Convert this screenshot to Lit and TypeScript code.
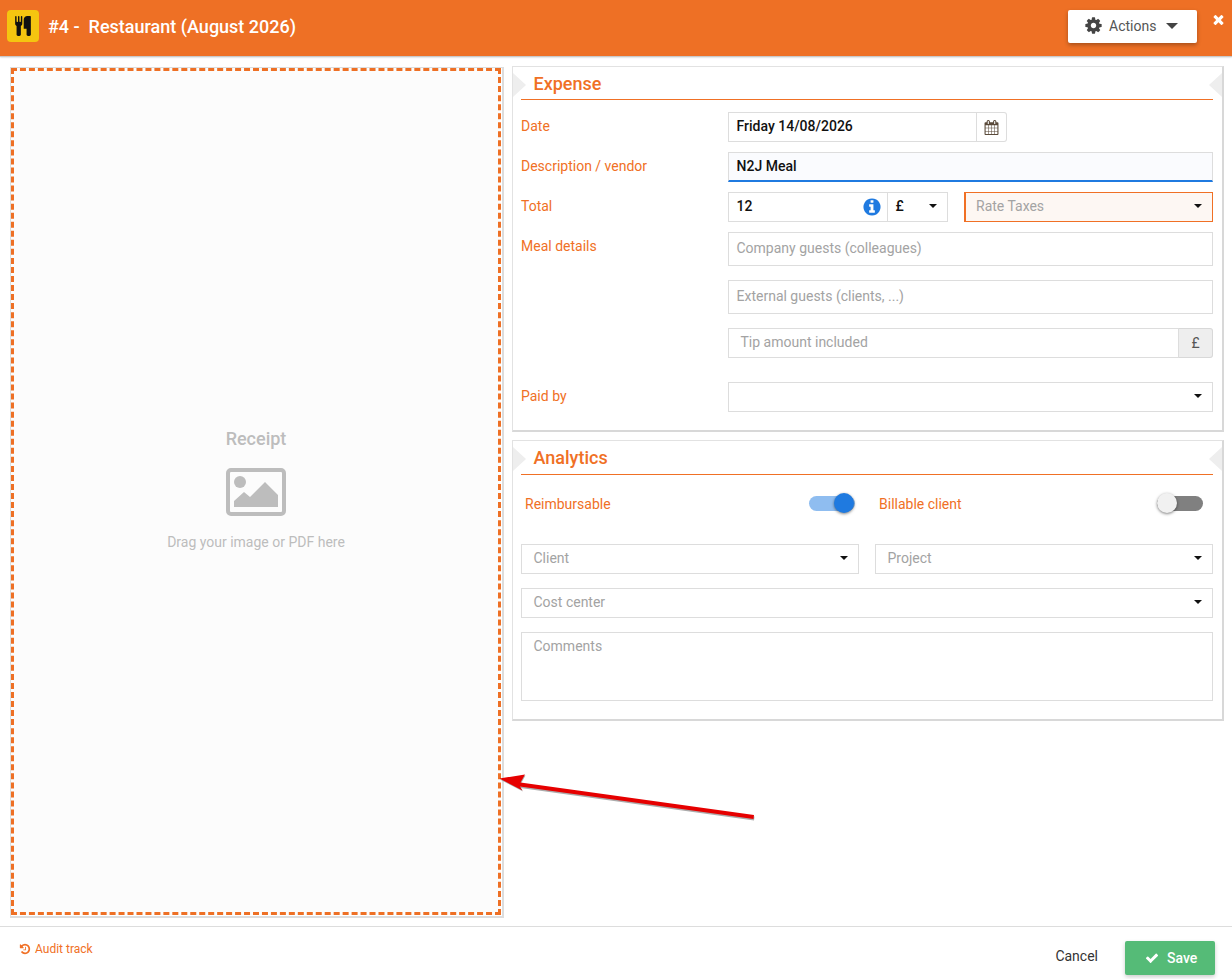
import { LitElement, html, css, svg } from "lit";
import { customElement } from "lit/decorators.js";

const fa = (d: string, cls: string) =>
  html`<svg class=${cls} viewBox="0 0 1792 1792" aria-hidden="true"><path d=${d}></path></svg>`;

const GEAR = "M1152 896q0-106-75-181t-181-75-181 75-75 181 75 181 181 75 181-75 75-181zm512-109v222q0 12-8 23t-20 13l-185 28q-19 54-39 91 35 50 107 138 10 12 10 25t-9 23q-27 37-99 108t-94 71q-12 0-26-9l-138-108q-44 23-91 38-16 136-29 186-7 28-36 28h-222q-14 0-24.500-8.500t-11.500-21.500l-28-184q-49-16-90-37l-141 107q-10 9-25 9-14 0-25-11-126-114-165-168-7-10-7-23 0-12 8-23 15-21 51-66.500t54-70.500q-27-50-41-99l-183-27q-13-2-21-12.500t-8-23.500v-222q0-12 8-23t19-13l186-28q14-46 39-92-40-57-107-138-10-12-10-24 0-10 9-23 26-36 98.500-107.500t94.500-71.500q13 0 26 10l138 107q44-23 91-38 16-136 29-186 7-28 36-28h222q14 0 24.500 8.500t11.500 21.500l28 184q49 16 90 37l142-107q9-9 24-9 13 0 25 10 129 119 165 170 7 8 7 22 0 12-8 23-15 21-51 66.500t-54 70.500q26 50 41 98l183 28q13 2 21 12.500t8 23.500z";
const CHECK = "M1671 566q0 40-28 68l-724 724-136 136q-28 28-68 28t-68-28l-136-136-362-362q-28-28-28-68t28-68l136-136q28-28 68-28t68 28l294 295 656-657q28-28 68-28t68 28l136 136q28 28 28 68z";
const TIMES = "M1490 1322q0 40-28 68l-136 136q-28 28-68 28t-68-28l-294-294-294 294q-28 28-68 28t-68-28l-136-136q-28-28-28-68t28-68l294-294-294-294q-28-28-28-68t28-68l136-136q28-28 68-28t68 28l294 294 294-294q28-28 68-28t68 28l136 136q28 28 28 68t-28 68l-294 294 294 294q28 28 28 68z";
const CUTLERY = "M832 64v640q0 61-35.500 111t-92.500 70v779q0 52-38 90t-90 38h-128q-52 0-90-38t-38-90v-779q-57-20-92.500-70t-35.500-111v-640q0-26 19-45t45-19 45 19 19 45v416q0 26 19 45t45 19 45-19 19-45v-416q0-26 19-45t45-19 45 19 19 45v416q0 26 19 45t45 19 45-19 19-45v-416q0-26 19-45t45-19 45 19 19 45zm768 0v1600q0 52-38 90t-90 38h-128q-52 0-90-38t-38-90v-512h-224q-13 0-22.500-9.500t-9.500-22.500v-800q0-132 94-226t226-94h256q26 0 45 19t19 45z";
const CALENDAR = "M192 1664h288v-288h-288v288zm352 0h320v-288h-320v288zm-352-352h288v-320h-288v320zm352 0h320v-320h-320v320zm-352-384h288v-288h-288v288zm736 736h320v-288h-320v288zm-384-736h320v-288h-320v288zm768 736h288v-288h-288v288zm-384-352h320v-320h-320v320zm-352-864v-288q0-13-9.500-22.500t-22.500-9.500h-64q-13 0-22.500 9.500t-9.500 22.500v288q0 13 9.500 22.500t22.500 9.500h64q13 0 22.500-9.500t9.500-22.500zm736 864h288v-320h-288v320zm-384-384h320v-288h-320v288zm384 0h288v-288h-288v288zm32-480v-288q0-13-9.500-22.500t-22.500-9.500h-64q-13 0-22.500 9.500t-9.500 22.500v288q0 13 9.500 22.500t22.500 9.500h64q13 0 22.500-9.500t9.500-22.500zm384-64v1280q0 52-38 90t-90 38h-1408q-52 0-90-38t-38-90v-1280q0-52 38-90t90-38h128v-96q0-66 47-113t113-47h64q66 0 113 47t47 113v96h384v-96q0-66 47-113t113-47h64q66 0 113 47t47 113v96h128q52 0 90 38t38 90z";
const INFO = "M1152 1376v-160q0-14-9-23t-23-9h-96v-512q0-14-9-23t-23-9h-320q-14 0-23 9t-9 23v160q0 14 9 23t23 9h96v320h-96q-14 0-23 9t-9 23v160q0 14 9 23t23 9h448q14 0 23-9t9-23zm-128-896v-160q0-14-9-23t-23-9h-192q-14 0-23 9t-9 23v160q0 14 9 23t23 9h192q14 0 23-9t9-23zm640 416q0 209-103 385.500t-279.500 279.500-385.500 103-385.500-103-279.500-279.500-103-385.500 103-385.500 279.500-279.500 385.500-103 385.500 103 279.500 279.500 103 385.500z";
const HISTORY = "M1664 896q0 156-61 298t-164 245-245 164-298 61q-172 0-327-72.500t-264-204.500q-7-10-6.500-22.500t8.500-20.500l137-138q10-9 25-9 16 2 23 12 73 95 179 147t225 52q104 0 198.500-40.500t163.500-109.500 109.500-163.500 40.500-198.500-40.500-198.500-109.500-163.500-163.500-109.500-198.500-40.500q-98 0-188 35.500t-160 101.500l137 138q31 30 14 69-17 40-59 40h-448q-26 0-45-19t-19-45v-448q0-42 40-59 39-17 69 14l130 129q107-101 244.500-156.500t284.500-55.500q156 0 298 61t245 164 164 245 61 298zm-640-288v448q0 14-9 23t-23 9h-320q-14 0-23-9t-9-23v-64q0-14 9-23t23-9h224v-352q0-14 9-23t23-9h64q14 0 23 9t9 23z";

@customElement("app-root")
export class AppRoot extends LitElement {
  static styles = css`
    :host { display: block; position: relative; height: 979px; overflow: hidden; background: #fff;
      font-family: Roboto, "Liberation Sans", sans-serif; font-size: 14px; color: #222; }
    * { box-sizing: border-box; }
    .page { display: flex; flex-direction: column; height: 979px; }

    .topbar { flex: none; height: 56px; background: #ee7025; display: flex; align-items: center;
      padding: 0 6px 4px 7px; box-shadow: 0 1px 0 #c9c9c9, 0 1px 2px #bbb; position: relative; }
    .logo { width: 32px; height: 32px; background: #f5c510; border-radius: 4px; display: flex;
      align-items: center; justify-content: center; }
    .logo svg { width: 20px; height: 20px; fill: #111; }
    .title { margin-left: 9px; font-size: 18px; font-weight: 500; color: #fff; white-space: pre; flex: 1; }
    .actions { width: 129px; height: 33px; background: #fff; border-radius: 2px; display: flex; align-items: center;
      box-shadow: 0 2px 4px rgba(0,0,0,.3); padding: 0 0 2px 16px; color: #555; margin-top: 1px; line-height: 16px; }
    .actions svg { width: 19px; height: 19px; fill: #444; margin-right: 6px; }
    .actions .big-caret { margin-left: 10px; border-left: 6px solid transparent; border-right: 6px solid transparent;
      border-top: 6px solid #444; }
    .close { width: 15px; height: 15px; fill: #fff; margin-left: 14px; align-self: flex-start; margin-top: 12px; }

    .main { flex: 1; display: flex; gap: 8px; padding: 10px 8px 0 10px; align-items: flex-start; }
    .zone { width: 494px; height: 851px; margin-top: 1px; flex: none; border: solid #ddd; border-width: 1px 2px 2px 1px;
      padding: 0 1px 1px 0; }
    .zone-inner { height: 100%; border: 3px dashed #ee7025; background: #fcfcfc; display: flex; flex-direction: column;
      align-items: center; justify-content: center; color: #bbb; padding-bottom: 3px; }
    .zone-title { font-size: 18px; font-weight: 500; color: #bdbdbd; line-height: 22px; }
    .zone-icon { width: 60px; height: 48px; margin: 18px 0 16px; display: block; }
    .zone-text { line-height: 20px; color: #bdbdbd; }

    .col { flex: 1; display: flex; flex-direction: column; gap: 8px; }
    .panel { position: relative; border: 1px solid #e2e2e2; border-right: 2px solid #d8d8d8; border-bottom: 2px solid #d8d8d8;
      padding: 0 9px 18px 8px; }
    .notch-l, .notch-r { position: absolute; top: 6px; width: 13px; height: 24px; background: #eee; }
    .notch-l { left: 0; clip-path: polygon(0 0, 100% 50%, 0 100%); }
    .notch-r { right: 0; clip-path: polygon(100% 0, 0 50%, 100% 100%); }
    h2 { margin: 0; font-size: 18px; font-weight: 500; color: #f07025; height: 33px; line-height: 34px; padding-left: 12.5px;
      border-bottom: 1px solid #f07025; }
    .tall { height: 34px; }

    .form { display: grid; grid-template-columns: 207px 1fr; margin-top: 12px; }
    .label { color: #f07025; line-height: 28px; }
    .stack { display: flex; flex-direction: column; }
    .mt10 { margin-top: 10px; }

    .fld { height: 30px; border: 1px solid #ddd; background: #fff; display: flex; align-items: center;
      padding: 0 8px 2px 7.5px; position: relative; }
    .val { font-weight: 500; color: #111; }
    .ph { color: #a3a3a3; }
    .caret { margin-left: auto; width: 0; height: 0; border-left: 4px solid transparent; border-right: 4px solid transparent;
      border-top: 4px solid #111; }

    .date { display: flex; width: 279px; }
    .date .fld { flex: 1; }
    .addon { flex: none; border: 1px solid #ddd; border-left: 0; border-radius: 0 3px 3px 0; display: flex;
      align-items: center; justify-content: center; height: 30px; }
    .addon.cal { width: 30px; }
    .addon.cal svg { width: 15px; height: 15px; fill: #5a4a3a; }
    .addon.cur { width: 34px; background: #eee; color: #555; border-color: #d8d8d8; }

    .focus { background: #fafbfe; border-bottom: 2px solid #1f7ae0; padding-bottom: 1px; }
    .total { display: flex; }
    .amount { width: 160px; }
    .amount svg { width: 20px; height: 20px; fill: #1f7ae0; position: absolute; right: 5px; top: 4px; }
    .currency { width: 60px; border-left: 0; padding-right: 10px; }
    .rate { flex: 1; margin-left: 16px; background: #fdf7f3; border: 1px solid #f07025; border-left-width: 2px; padding: 0 10px 2px 10px; }
    .guest { height: 34px; }
    .gap14 { margin-top: 14px; }
    .gap24 { margin-top: 24px; }
    .tip { display: flex; }
    .tip .fld { flex: 1; padding-left: 11.5px; }
    .paid { padding-right: 10px; }

    .toggles { display: grid; grid-template-columns: 1fr 1fr; column-gap: 16px; margin: 15px 0 26px; }
    .tog { display: flex; align-items: center; justify-content: space-between; height: 28px; padding-left: 4px; color: #f07025; }
    .tog.a { padding-right: 4px; }
    .tog.b { padding-right: 10px; }
    .switch { position: relative; width: 46px; height: 15px; border-radius: 8px; margin-top: -1px; }
    .switch.on { background: #8fbdf0; }
    .switch.off { background: #808080; }
    .switch::after { content: ""; position: absolute; top: -3px; width: 20px; height: 20px; border-radius: 50%;
      box-shadow: 0 1px 3px rgba(0,0,0,.5); }
    .switch.on::after { right: 1px; background: #1f7ae0; }
    .switch.off::after { left: 0; background: #f1f1f1; }

    .grid2 { display: grid; grid-template-columns: 1fr 1fr; column-gap: 16px; }
    .sel { padding: 0 10px 2px 11.5px; }
    .comments { height: 69px; align-items: flex-start; padding: 5px 11.5px; line-height: 17px; }

    .footer { flex: none; height: 53px; border-top: 1px solid #ddd; display: flex; align-items: flex-start;
      padding: 14px 17px 0 19px; }
    .audit { display: flex; align-items: center; color: #f07025; font-size: 12px; gap: 4px; height: 16px; }
    .audit svg { width: 12px; height: 12px; fill: #f07025; }
    .spacer { flex: 1; }
    .cancel { color: #333; margin-top: 5px; line-height: 20px; margin-right: 27px; }
    .save { width: 90px; height: 34px; background: #55bb77; color: #fff; border-radius: 2px; display: flex; align-items: center;
      padding-left: 20px; gap: 8px; box-shadow: 0 2px 4px rgba(0,0,0,.2); font-weight: 500; }
    .save svg { width: 14px; height: 14px; fill: #fff; }

    .arrow { position: absolute; left: 0; top: 0; width: 1232px; height: 979px; pointer-events: none; }
  `;

  render() {
    return html`
      <div class="page">
        <header class="topbar">
          <div class="logo">${fa(CUTLERY, "")}</div>
          <div class="title">#4 -  Restaurant (August 2026)</div>
          <div class="actions">${fa(GEAR, "")}<span>Actions</span><span class="big-caret"></span></div>
          ${fa(TIMES, "close")}
        </header>

        <div class="main">
          <div class="zone">
            <div class="zone-inner">
              <div class="zone-title">Receipt</div>
              <svg class="zone-icon" viewBox="0 0 60 48" aria-hidden="true">
                <rect x="2" y="2" width="56" height="44" rx="3" fill="none" stroke="#bdbdbd" stroke-width="4"></rect>
                <circle cx="14" cy="14" r="6" fill="#bdbdbd"></circle>
                <path d="M8 39v-6l10-9 6 5 15-15 13 13v12z" fill="#bdbdbd"></path>
              </svg>
              <div class="zone-text">Drag your image or PDF here</div>
            </div>
          </div>

          <div class="col">
            <section class="panel">
              <i class="notch-l"></i><i class="notch-r"></i>
              <h2>Expense</h2>
              <div class="form">
                <div class="label">Date</div>
                <div class="date">
                  <div class="fld"><span class="val">Friday 14/08/2026</span></div>
                  <div class="addon cal">${fa(CALENDAR, "")}</div>
                </div>

                <div class="label mt10">Description / vendor</div>
                <div class="fld focus mt10"><span class="val">N2J Meal</span></div>

                <div class="label mt10">Total</div>
                <div class="total mt10">
                  <div class="fld amount"><span class="val">12</span>${fa(INFO, "")}</div>
                  <div class="fld currency"><span class="val">£</span><span class="caret"></span></div>
                  <div class="fld rate"><span class="ph">Rate Taxes</span><span class="caret"></span></div>
                </div>

                <div class="label mt10">Meal details</div>
                <div class="stack mt10">
                  <div class="fld guest"><span class="ph">Company guests (colleagues)</span></div>
                  <div class="fld guest gap14"><span class="ph">External guests (clients, ...)</span></div>
                  <div class="tip gap14">
                    <div class="fld"><span class="ph">Tip amount included</span></div>
                    <div class="addon cur">£</div>
                  </div>
                </div>

                <div class="label gap24">Paid by</div>
                <div class="fld paid gap24"><span class="caret"></span></div>
              </div>
            </section>

            <section class="panel">
              <i class="notch-l"></i><i class="notch-r"></i>
              <h2 class="tall">Analytics</h2>
              <div class="toggles">
                <div class="tog a"><span>Reimbursable</span><span class="switch on"></span></div>
                <div class="tog b"><span>Billable client</span><span class="switch off"></span></div>
              </div>
              <div class="grid2">
                <div class="fld sel"><span class="ph">Client</span><span class="caret"></span></div>
                <div class="fld sel"><span class="ph">Project</span><span class="caret"></span></div>
              </div>
              <div class="fld sel gap14"><span class="ph">Cost center</span><span class="caret"></span></div>
              <div class="fld comments gap14"><span class="ph">Comments</span></div>
            </section>
          </div>
        </div>

        <footer class="footer">
          <div class="audit">${fa(HISTORY, "")}<span>Audit track</span></div>
          <div class="spacer"></div>
          <div class="cancel">Cancel</div>
          <div class="save">${fa(CHECK, "")}<span>Save</span></div>
        </footer>
      </div>

      <svg class="arrow" viewBox="0 0 1232 979" aria-hidden="true">
        ${svg`<path d="M499.500 778.500L525 774.500L520.500 782.500L754 815.500L753.500 819.500L520 787L522.500 790.500Z" fill="#888" transform="translate(0.500 1)" opacity=".7"></path>
        <path d="M499.500 778.500L525 774.500L520.500 782.500L754 815L753.500 819L520 786.500L522.500 790.500Z" fill="#e60000"></path>`}
      </svg>
    `;
  }
}
